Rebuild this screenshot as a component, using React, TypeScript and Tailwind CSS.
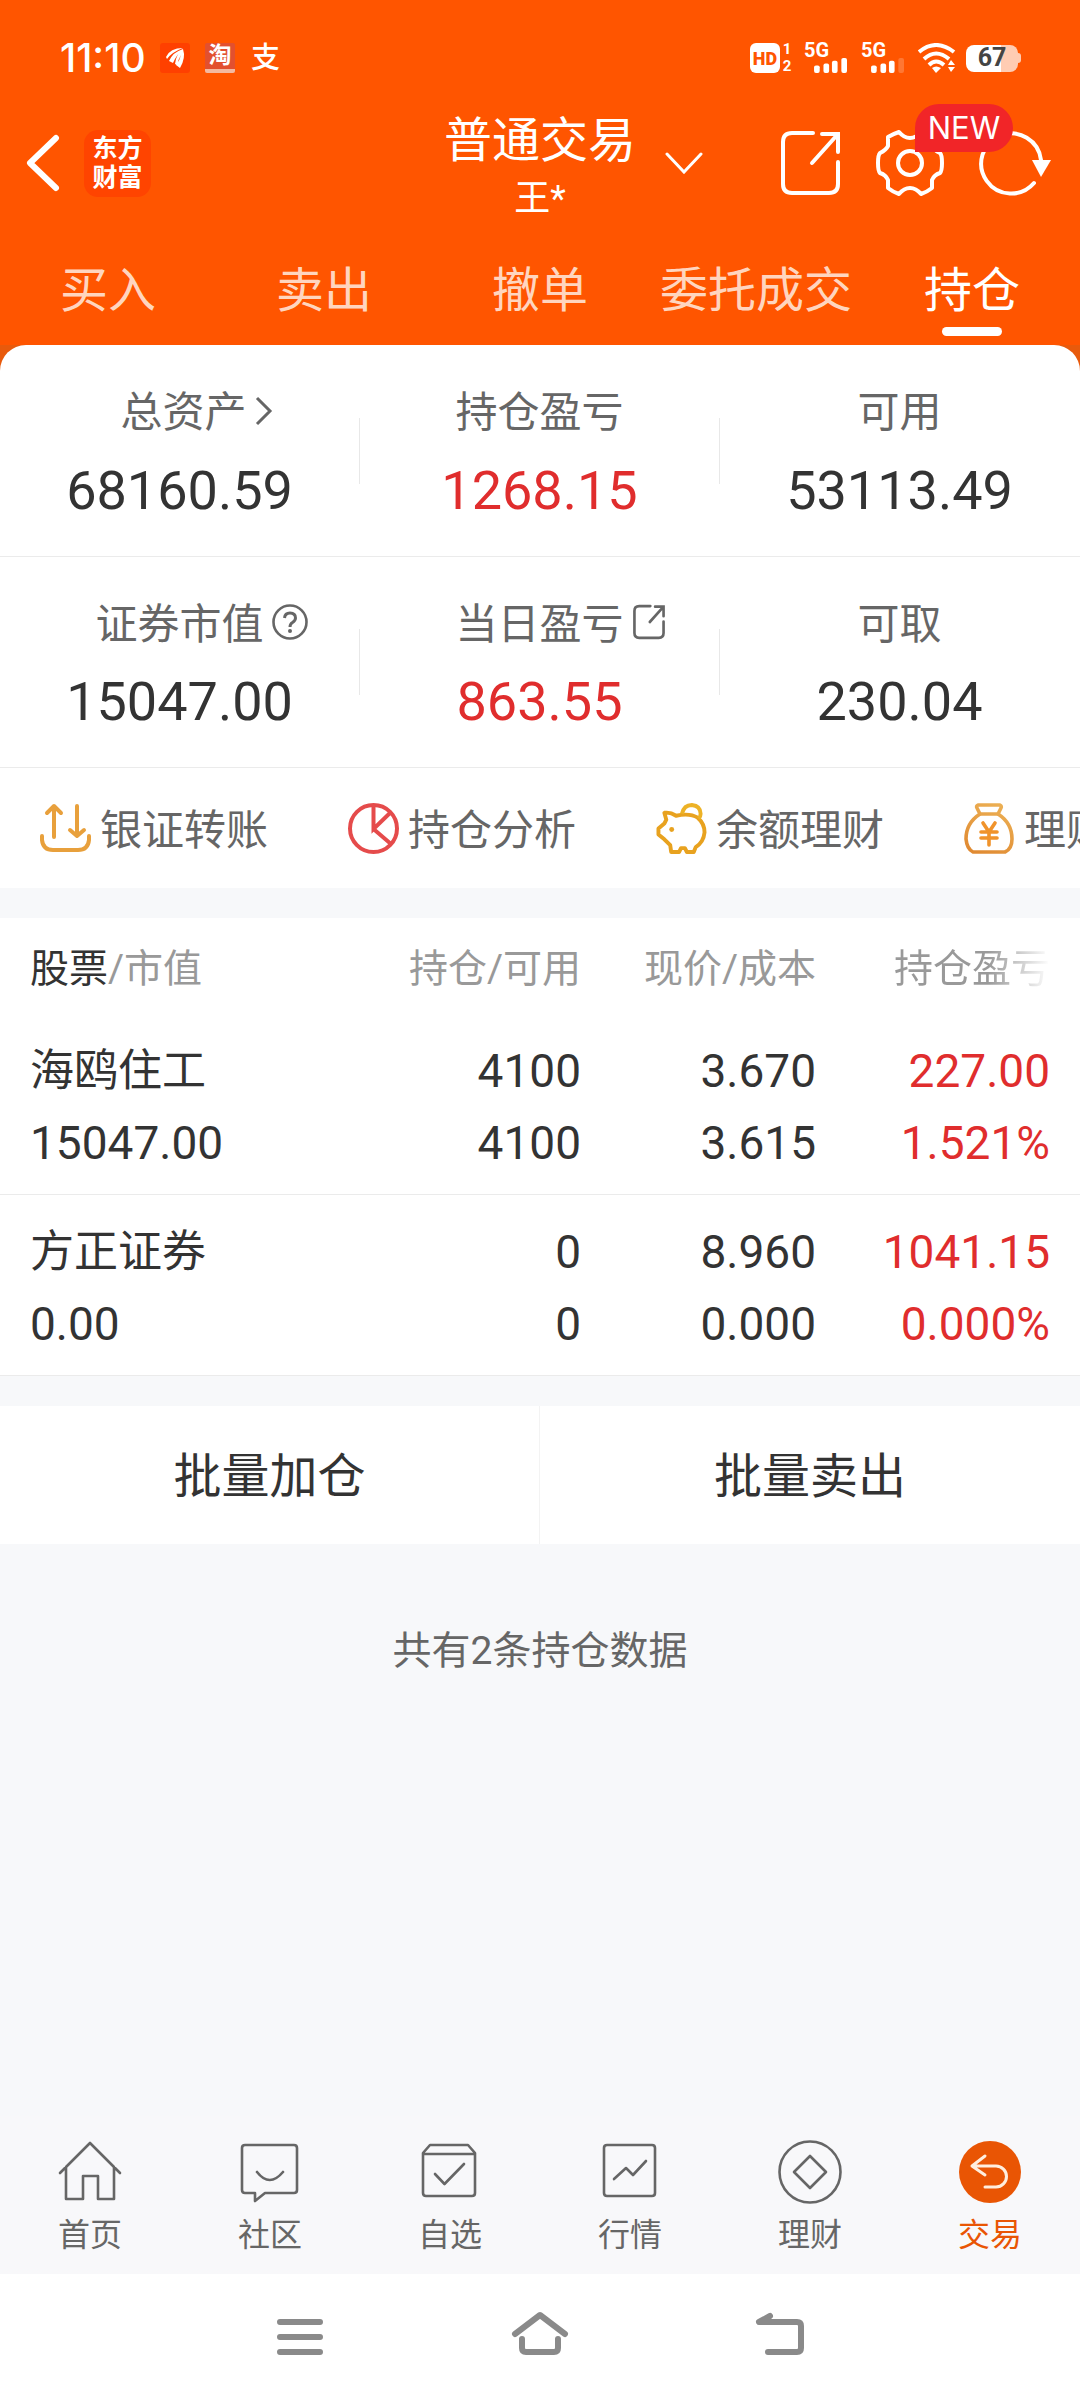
import React from 'react';
import { clsx } from 'clsx';

type IconProps = { className?: string; strokeWidth?: number };

const tradeTabs = ['买入', '卖出', '撤单', '委托成交', '持仓'];

const holdings = [
  { name: '海鸥住工', value: '15047.00', held: '4100', usable: '4100', price: '3.670', cost: '3.615', profit: '227.00', rate: '1.521%' },
  { name: '方正证券', value: '0.00', held: '0', usable: '0', price: '8.960', cost: '0.000', profit: '1041.15', rate: '0.000%' },
];

function ShareIcon({ className, strokeWidth = 4 }: IconProps) {
  return (
    <svg viewBox="0 0 61 68" className={className} fill="none" stroke="currentColor" strokeWidth={strokeWidth} strokeLinecap="round">
      <path d="M33 4H12Q3 4 3 13V55Q3 64 12 64H49Q58 64 58 55V33" />
      <path d="M42 5H58V23M58 5L32 34" />
    </svg>
  );
}

function GearIcon({ className }: IconProps) {
  return (
    <svg viewBox="0 0 68 68" className={className} fill="none" stroke="currentColor" strokeWidth="4" strokeLinejoin="round">
      <path d="M23 3Q28 9 34 9Q40 9 45 3Q51 5 56 8V17Q58 21 64 24Q66 26 66 34Q66 42 64 44Q58 46 56 51V59Q51 63 45 65Q40 59 34 59Q28 59 23 65Q17 63 12 59V51Q10 46 4 44Q2 42 2 34Q2 26 4 24Q10 21 12 17V8Q17 5 23 3Z" />
      <circle cx="34" cy="34" r="12" />
    </svg>
  );
}

function RefreshIcon({ className }: IconProps) {
  return (
    <svg viewBox="0 0 72 68" className={className} fill="none" stroke="currentColor" strokeWidth="4" strokeLinecap="round">
      <path d="M55 54A30 30 0 1 1 62 31" />
      <path d="M53 31H72L62 48Z" fill="currentColor" stroke="none" />
    </svg>
  );
}

function TransferIcon() {
  return (
    <svg viewBox="0 0 51 51" className="size-[51px] shrink-0" fill="none" stroke="#e8a03c" strokeWidth="4" strokeLinecap="round" strokeLinejoin="round">
      <path d="M14 34V3M7 10L14 3L21 10" />
      <path d="M37 3V33M30 27L37 33L44 27" />
      <path d="M2 33V37Q3 47 13 47H38Q48 47 49 37V33" />
    </svg>
  );
}

function PieIcon() {
  return (
    <svg viewBox="0 0 51 51" className="size-[51px] shrink-0" fill="none" stroke="#e54b4b" strokeWidth="4">
      <circle cx="25.5" cy="25.5" r="23.5" />
      <path d="M25.5 2V26L43 9M25.5 26L43 41" />
    </svg>
  );
}

function PiggyIcon() {
  return (
    <svg viewBox="0 0 51 52" className="size-[51px] shrink-0" fill="none" stroke="#e8a21f" strokeWidth="4" strokeLinejoin="round">
      <path d="M8 10Q14 9 20 13Q34 10 42 15Q49 21 49 30Q48 40 40 45L38 50H31L29 46H25L23 50H15L14 43L8 37L2 32V26L8 21L10 17Z" />
      <path d="M26 11Q28 2 36 2Q45 3 45 11Q45 14 43 16" stroke="#edb226" />
      <circle cx="15.5" cy="27" r="2.5" fill="#e8a21f" stroke="none" />
    </svg>
  );
}

function MoneyBagIcon() {
  return (
    <svg viewBox="0 0 51 51" className="size-[51px] shrink-0" fill="none" stroke="url(#bag)" strokeWidth="3.6" strokeLinecap="round" strokeLinejoin="round">
      <defs>
        <linearGradient id="bag" gradientUnits="userSpaceOnUse" x1="36" y1="0" x2="12" y2="50">
          <stop offset="0" stopColor="#ecb054" />
          <stop offset="1" stopColor="#e08a32" />
        </linearGradient>
      </defs>
      <path d="M14 2H36Q38 3 37 5L34 11H16L13 5Q12 3 14 2Z" />
      <path d="M16 11Q2 20 2 36Q3 46 9 49H41Q48 46 48 36Q48 20 34 11" />
      <path d="M19 20L25 29L31 20M25 29V42M17 29H33M17 35H33" stroke="#f0932b" />
    </svg>
  );
}

function WifiIcon() {
  return (
    <svg viewBox="0 0 38 30" className="h-[30px] w-[38px]" fill="none" stroke="currentColor" strokeWidth="4">
      <path d="M1 9Q18 -5 36 9" />
      <path d="M6 16Q18 5 31 16" />
      <path d="M11 22Q18 15 26 22" />
      <path d="M14 25Q18 22 23 25L18 30Z" fill="currentColor" stroke="none" />
      <path d="M30 22L33 17L37 22ZM30 24H37L33 29Z" fill="currentColor" stroke="none" />
    </svg>
  );
}

function Signal({ weak }: { weak?: boolean }) {
  return (
    <div className="flex h-[30px] w-[45px] flex-col justify-between">
      <span className="font-[Roboto] text-[20px] leading-[14px] font-bold">5G</span>
      <svg viewBox="0 0 36 17" className="ml-[9px] h-[17px] w-[36px]" fill="currentColor">
        <rect x="0" y="9" width="6" height="8" rx="2" />
        <rect x="10" y="7" width="6" height="10" rx="2" />
        <rect x="19" y="4" width="6" height="13" rx="2" />
        <rect x="29" y="1" width="6" height="16" rx="2" opacity={weak ? 0.2 : 1} />
      </svg>
    </div>
  );
}

function StatusBar() {
  return (
    <div className="flex h-24 items-center justify-between pt-5 pr-[59px] pl-[60px]">
      <div className="flex items-center">
        <span className="w-[100px] font-[Inter] text-[39px] leading-10 font-medium">11:10</span>
        <svg viewBox="0 0 30 30" className="size-[30px]">
          <rect width="30" height="30" rx="3" fill="#ff4000" />
          <path d="M6 14Q10 5 23 5Q12 9 7 16ZM9 18Q13 9 23 6Q17 11 13 20ZM15 21Q16 11 23 6Q26 15 20 25L16 22Q20 17 21 12Q18 17 17 22Z" fill="#fff" />
        </svg>
        <span className="ml-[15px] flex size-[30px] items-center justify-center overflow-hidden rounded-xs border-b-4 border-[#f3b9a0] bg-[#e2502f] text-[23px] leading-6 font-bold">淘</span>
        <span className="ml-4 text-[29px] leading-[30px] font-medium">支</span>
      </div>
      <div className="flex items-center">
        <span className="flex h-[30px] w-[30px] items-center justify-center rounded-md bg-white font-[Roboto] text-[18px] font-black text-[#ff5500]">HD</span>
        <span className="ml-0.5 flex w-2.5 flex-col text-center font-[Roboto] text-[15px] leading-[17px] font-bold">
          <span>1</span>
          <span>2</span>
        </span>
        <div className="ml-3 flex gap-3">
          <Signal />
          <Signal weak />
        </div>
        <span className="ml-3"><WifiIcon /></span>
        <span className="ml-2.5 flex h-[27px] w-[52px] items-center justify-center rounded-lg bg-linear-to-r from-white from-67% to-[#ffccb3] to-67% font-[Roboto] text-[25px] font-bold text-[#444]">67</span>
        <span className="h-2.5 w-[3px] rounded-r-sm bg-[#ffccb3]" />
      </div>
    </div>
  );
}

function TitleBar() {
  return (
    <div className="grid h-[134px] grid-cols-[1fr_auto_1fr] items-center">
      <div className="flex items-center pl-[26px]">
        <button type="button" aria-label="返回">
          <svg viewBox="0 0 34 58" className="h-[58px] w-[34px]" fill="none" stroke="currentColor" strokeWidth="6" strokeLinecap="round" strokeLinejoin="round">
            <path d="M30 4L4 29L30 54" />
          </svg>
        </button>
        <div className="ml-6 flex size-[67px] items-center justify-center rounded-[14px] bg-[#ff4400] text-center text-[25px] leading-[29px] font-bold">
          <span>东方<br />财富</span>
        </div>
      </div>
      <div className="pt-4 text-center">
        <h1 className="text-[48px] leading-[56px]">普通交易</h1>
        <p className="text-[36px] leading-[60px]">王*</p>
      </div>
      <div className="flex items-center pr-[29px] pl-[29px]">
        <button type="button" aria-label="切换账户">
          <svg viewBox="0 0 38 22" className="h-[22px] w-[38px]" fill="none" stroke="currentColor" strokeWidth="3" strokeLinecap="round">
            <path d="M2 2L19 20L36 2" />
          </svg>
        </button>
        <button type="button" aria-label="分享" className="ml-auto">
          <ShareIcon className="h-[68px] w-[61px]" />
        </button>
        <button type="button" aria-label="设置" className="relative ml-[35px]">
          <GearIcon className="size-[68px]" />
          <span className="absolute -top-[25px] left-[39px] flex h-12 w-[98px] items-center justify-center rounded-3xl rounded-bl-none bg-[#f12528] font-[Inter] text-[31px]">NEW</span>
        </button>
        <button type="button" aria-label="刷新" className="ml-[35px]">
          <RefreshIcon className="h-[68px] w-[72px]" />
        </button>
      </div>
    </div>
  );
}

function Header() {
  return (
    <header className="bg-[#ff5500] text-white">
      <StatusBar />
      <TitleBar />
      <nav className="grid grid-cols-5">
        {tradeTabs.map((tab, i) => {
          const active = i === tradeTabs.length - 1;
          return (
            <button key={tab} type="button" className="flex h-[115px] flex-col items-center justify-end pb-[9px]">
              <span className={clsx('text-[48px] leading-[60px] whitespace-nowrap', !active && 'text-[#ffd5bf]')}>{tab}</span>
              <span className={clsx('mt-1.5 h-[9px] w-[60px] rounded-full', active && 'bg-white')} />
            </button>
          );
        })}
      </nav>
    </header>
  );
}

// icon sits right of the label without shifting the label's centre
function Stat({ label, value, red, icon, divider }: { label: string; value: string; red?: boolean; icon?: React.ReactNode; divider?: boolean }) {
  return (
    <div className="flex items-center">
      <div className="flex-1 pt-2 text-center">
        <div className="flex h-[60px] items-center justify-center text-[42px] text-[#666]">
          <span>{label}</span>
          {icon}
        </div>
        <div className={clsx('mt-3 text-[54px] leading-[72px]', red ? 'text-[#e02d2d]' : 'text-[#333]')}>{value}</div>
      </div>
      <span className={clsx('h-[66px] w-px', divider && 'bg-[#e8e8e8]')} />
    </div>
  );
}

function Summary() {
  return (
    <section className="bg-[#e85a0c]">
      <div className="rounded-t-[26px] bg-white">
        <div className="grid h-[212px] grid-cols-3 border-b border-[#ebebeb]">
          <Stat
            label="总资产"
            value="68160.59"
            divider
            icon={
              <svg viewBox="0 0 18 30" className="-mr-[34px] mb-1 ml-2 h-[30px] w-[18px]" fill="none" stroke="currentColor" strokeWidth="3">
                <path d="M2 2L15 15L2 28" />
              </svg>
            }
          />
          <Stat label="持仓盈亏" value="1268.15" red divider />
          <Stat label="可用" value="53113.49" />
        </div>
        <div className="grid h-[211px] grid-cols-3 border-b border-[#ebebeb]">
          <Stat
            label="证券市值"
            value="15047.00"
            divider
            icon={
              <svg viewBox="0 0 36 36" className="-mr-11 mb-1 ml-2 size-9" fill="none" stroke="currentColor" strokeWidth="2.6">
                <circle cx="18" cy="18" r="16.5" />
                <path d="M12.5 14Q13 9 18 9Q23.500 9 23.500 14Q23.500 16.500 20.500 18.500Q18 20 18 23" strokeWidth="3" />
                <circle cx="18" cy="27" r="2" fill="currentColor" stroke="none" />
              </svg>
            }
          />
          <Stat label="当日盈亏" value="863.55" red divider icon={<ShareIcon className="-mr-[42px] mb-1 ml-2 h-9 w-[34px]" strokeWidth={5} />} />
          <Stat label="可取" value="230.04" />
        </div>
      </div>
    </section>
  );
}

const shortcuts = [
  { label: '银证转账', icon: <TransferIcon /> },
  { label: '持仓分析', icon: <PieIcon /> },
  { label: '余额理财', icon: <PiggyIcon /> },
  { label: '理财', icon: <MoneyBagIcon /> },
];

function Shortcuts() {
  return (
    <div className="flex h-[120px] gap-20 overflow-hidden bg-white pl-10">
      {shortcuts.map((s) => (
        <button key={s.label} type="button" className="flex shrink-0 items-center gap-[9px] text-[42px] whitespace-nowrap text-[#666]">
          {s.icon}
          <span className="pt-1">{s.label}</span>
        </button>
      ))}
    </div>
  );
}

function Holdings() {
  return (
    <table className="mt-[30px] w-full table-fixed border-collapse bg-white text-right">
      <thead>
        <tr className="h-24 text-[39px] whitespace-nowrap text-[#999]">
          <th className="pt-1.5 pl-[30px] text-left font-normal"><span className="text-[#333]">股票</span>/市值</th>
          <th className="w-[236px] pt-1.5 font-normal">持仓/可用</th>
          <th className="w-[235px] pt-1.5 font-normal">现价/成本</th>
          <th className="w-[264px] pt-1.5 pr-[30px] font-normal">
            <span className="bg-linear-to-r from-[#999] from-60% to-white bg-clip-text text-transparent">持仓盈亏</span>
          </th>
        </tr>
      </thead>
      <tbody>
        {holdings.map((h) => (
          <tr key={h.name} className="border-b border-[#ebebeb] text-[46px] leading-[72px] text-[#333]">
            <td className="pt-[21px] pb-[15px] pl-[30px] text-left">
              <div className="text-[44px]">{h.name}</div>
              <div>{h.value}</div>
            </td>
            <td className="pt-[21px] pb-[15px]">
              <div>{h.held}</div>
              <div>{h.usable}</div>
            </td>
            <td className="pt-[21px] pb-[15px]">
              <div>{h.price}</div>
              <div>{h.cost}</div>
            </td>
            <td className="pt-[21px] pr-[30px] pb-[15px] text-[#e02d2d]">
              <div>{h.profit}</div>
              <div>{h.rate}</div>
            </td>
          </tr>
        ))}
      </tbody>
    </table>
  );
}

const bottomTabs = [
  {
    label: '首页',
    icon: <path d="M2 33L32 3L62 33M8 27V59H25V36H40V59H56V27" />,
  },
  {
    label: '社区',
    icon: <path d="M7 5H56Q59 5 59 8V50Q59 53 56 53H27L17 61V53H7Q4 53 4 50V8Q4 5 7 5ZM19 32Q31.500 48 45 32" />,
  },
  {
    label: '自选',
    icon: <path d="M5 13L12 5H50L57 13V53Q57 56 54 56H8Q5 56 5 53ZM5 14H57M17 34L26.500 44L46 24" />,
  },
  {
    label: '行情',
    icon: <path d="M9 5H54Q57 5 57 8V53Q57 56 54 56H9Q6 56 6 53V8Q6 5 9 5ZM16 39L28 28L35 35L48 21" />,
  },
  {
    label: '理财',
    icon: (
      <>
        <circle cx="32" cy="32" r="30.500" />
        <path d="M32 16L48 32L32 48L16 32Z" />
      </>
    ),
  },
  {
    label: '交易',
    active: true,
    icon: (
      <>
        <circle cx="32" cy="32" r="31" fill="currentColor" stroke="none" />
        <path d="M27 16L14 26L27 35M14 26H38A10.500 10.500 0 0 1 38 47H27" stroke="#ffeede" strokeWidth="3" />
      </>
    ),
  },
];

function BottomTabs() {
  return (
    <nav className="grid grid-cols-6 bg-[#f8f8fa] pt-6 pb-[17px]">
      {bottomTabs.map((tab) => (
        <button key={tab.label} type="button" className={clsx('flex flex-col items-center gap-[9px]', tab.active ? 'text-[#e95504]' : 'text-[#666]')}>
          <svg viewBox="0 0 64 64" className="size-16" fill="none" stroke="currentColor" strokeWidth="2.6" strokeLinecap="round" strokeLinejoin="round">
            {tab.icon}
          </svg>
          <span className="text-[32px] leading-[44px]">{tab.label}</span>
        </button>
      ))}
    </nav>
  );
}

const systemKeys = [
  { label: '最近任务', d: 'M10 12H50M10 27H50M10 42H50' },
  { label: '主屏幕', d: 'M5 24L30 5L55 24M12 29V38Q12 42 16 42H44Q48 42 48 38V29' },
  { label: '返回', d: 'M20 6L9 12H47Q51 12 51 16V38Q51 42 47 42H18' },
];

function SystemNav() {
  return (
    <div className="flex h-[126px] justify-center gap-[180px] bg-white pt-9 text-[#8a8a8a]">
      {systemKeys.map((k) => (
        <button key={k.label} type="button" aria-label={k.label} className="h-12">
          <svg viewBox="0 0 60 48" className="h-12 w-[60px]" fill="none" stroke="currentColor" strokeWidth="6" strokeLinecap="round" strokeLinejoin="round">
            <path d={k.d} />
          </svg>
        </button>
      ))}
    </div>
  );
}

export default function App() {
  return (
    <div className="flex min-h-screen flex-col bg-[#f7f8fa] font-[Roboto,'Noto_Sans_CJK_SC',sans-serif]">
      <Header />
      <main className="flex-1">
        <Summary />
        <Shortcuts />
        <Holdings />
        <div className="mt-[30px] grid h-[138px] grid-cols-2 bg-white text-[48px] text-[#333]">
          <button type="button" className="border-r border-[#f3f3f3] pt-1">批量加仓</button>
          <button type="button" className="pt-1">批量卖出</button>
        </div>
        <p className="pt-20 text-center text-[39px] leading-[54px] text-[#666]">共有2条持仓数据</p>
      </main>
      <BottomTabs />
      <SystemNav />
    </div>
  );
}
